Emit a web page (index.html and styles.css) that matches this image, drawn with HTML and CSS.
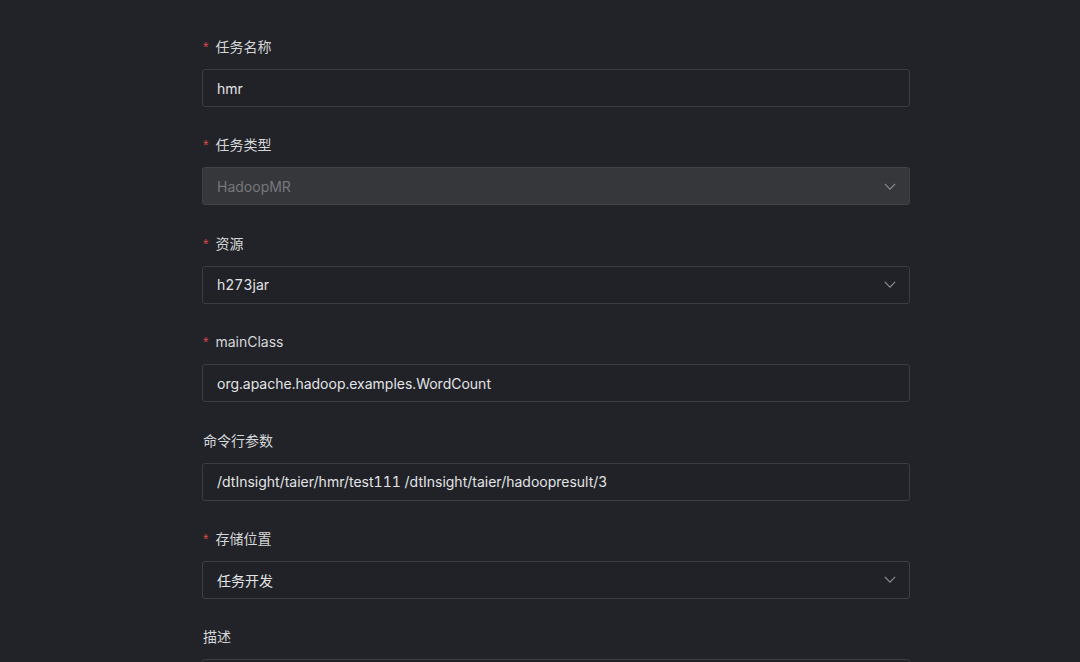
FILE: index.html
```html
<!DOCTYPE html>
<html lang="zh-CN">
<head>
<meta charset="utf-8">
<link rel="stylesheet" href="styles.css">
</head>
<body>
<form class="form">
  <div class="item">
    <label class="label required">任务名称</label>
    <div class="input">hmr</div>
  </div>
  <div class="item">
    <label class="label required">任务类型</label>
    <div class="input select disabled"><span>HadoopMR</span><svg class="arrow" viewBox="0 0 14 8"><path d="M1 1l6 6 6-6"/></svg></div>
  </div>
  <div class="item">
    <label class="label required">资源</label>
    <div class="input select"><span>h273jar</span><svg class="arrow" viewBox="0 0 14 8"><path d="M1 1l6 6 6-6"/></svg></div>
  </div>
  <div class="item">
    <label class="label required">mainClass</label>
    <div class="input">org.apache.hadoop.examples.WordCount</div>
  </div>
  <div class="item">
    <label class="label">命令行参数</label>
    <div class="input">/dtInsight/taier/hmr/test111 /dtInsight/taier/hadoopresult/3</div>
  </div>
  <div class="item">
    <label class="label required">存储位置</label>
    <div class="input select"><span>任务开发</span><svg class="arrow" viewBox="0 0 14 8"><path d="M1 1l6 6 6-6"/></svg></div>
  </div>
  <div class="item">
    <label class="label">描述</label>
    <div class="input textarea"></div>
  </div>
</form>
</body>
</html>
```
FILE: styles.css
```css
html, body {
  margin: 0;
  padding: 0;
  background: #212328;
  height: 100%;
  overflow: hidden;
}
body {
  font-family: "Inter", "Noto Sans CJK SC", sans-serif;
  font-size: 14px;
  color: #d8d9db;
  font-variant-numeric: tabular-nums;
}
.form {
  width: 708px;
  margin-left: 202px;
  padding-top: 36px;
  display: flex;
  flex-direction: column;
  gap: 27.4px;
}
.item {
  display: flex;
  flex-direction: column;
  gap: 11px;
}
.label {
  height: 22px;
  line-height: 22px;
  padding-left: 1px;
  color: #d6d7d9;
}
.label.required::before {
  content: "*";
  color: #d9484a;
  margin-right: 7px;
  font-family: "Liberation Sans", sans-serif;
}
.input {
  box-sizing: border-box;
  height: 38px;
  border: 1px solid #3b3d42;
  border-radius: 3px;
  background: #202227;
  padding: 0 14px;
  display: flex;
  align-items: center;
  color: #e3e4e6;
}
.select {
  justify-content: space-between;
}
.disabled {
  background: #35373b;
  border-color: #3f4145;
  color: #76787c;
}
.arrow {
  width: 12px;
  height: 7px;
  margin-right: -1px;
  fill: none;
  stroke: #8d8e92;
  stroke-width: 1.4;
}
.textarea {
  height: 80px;
}
```
